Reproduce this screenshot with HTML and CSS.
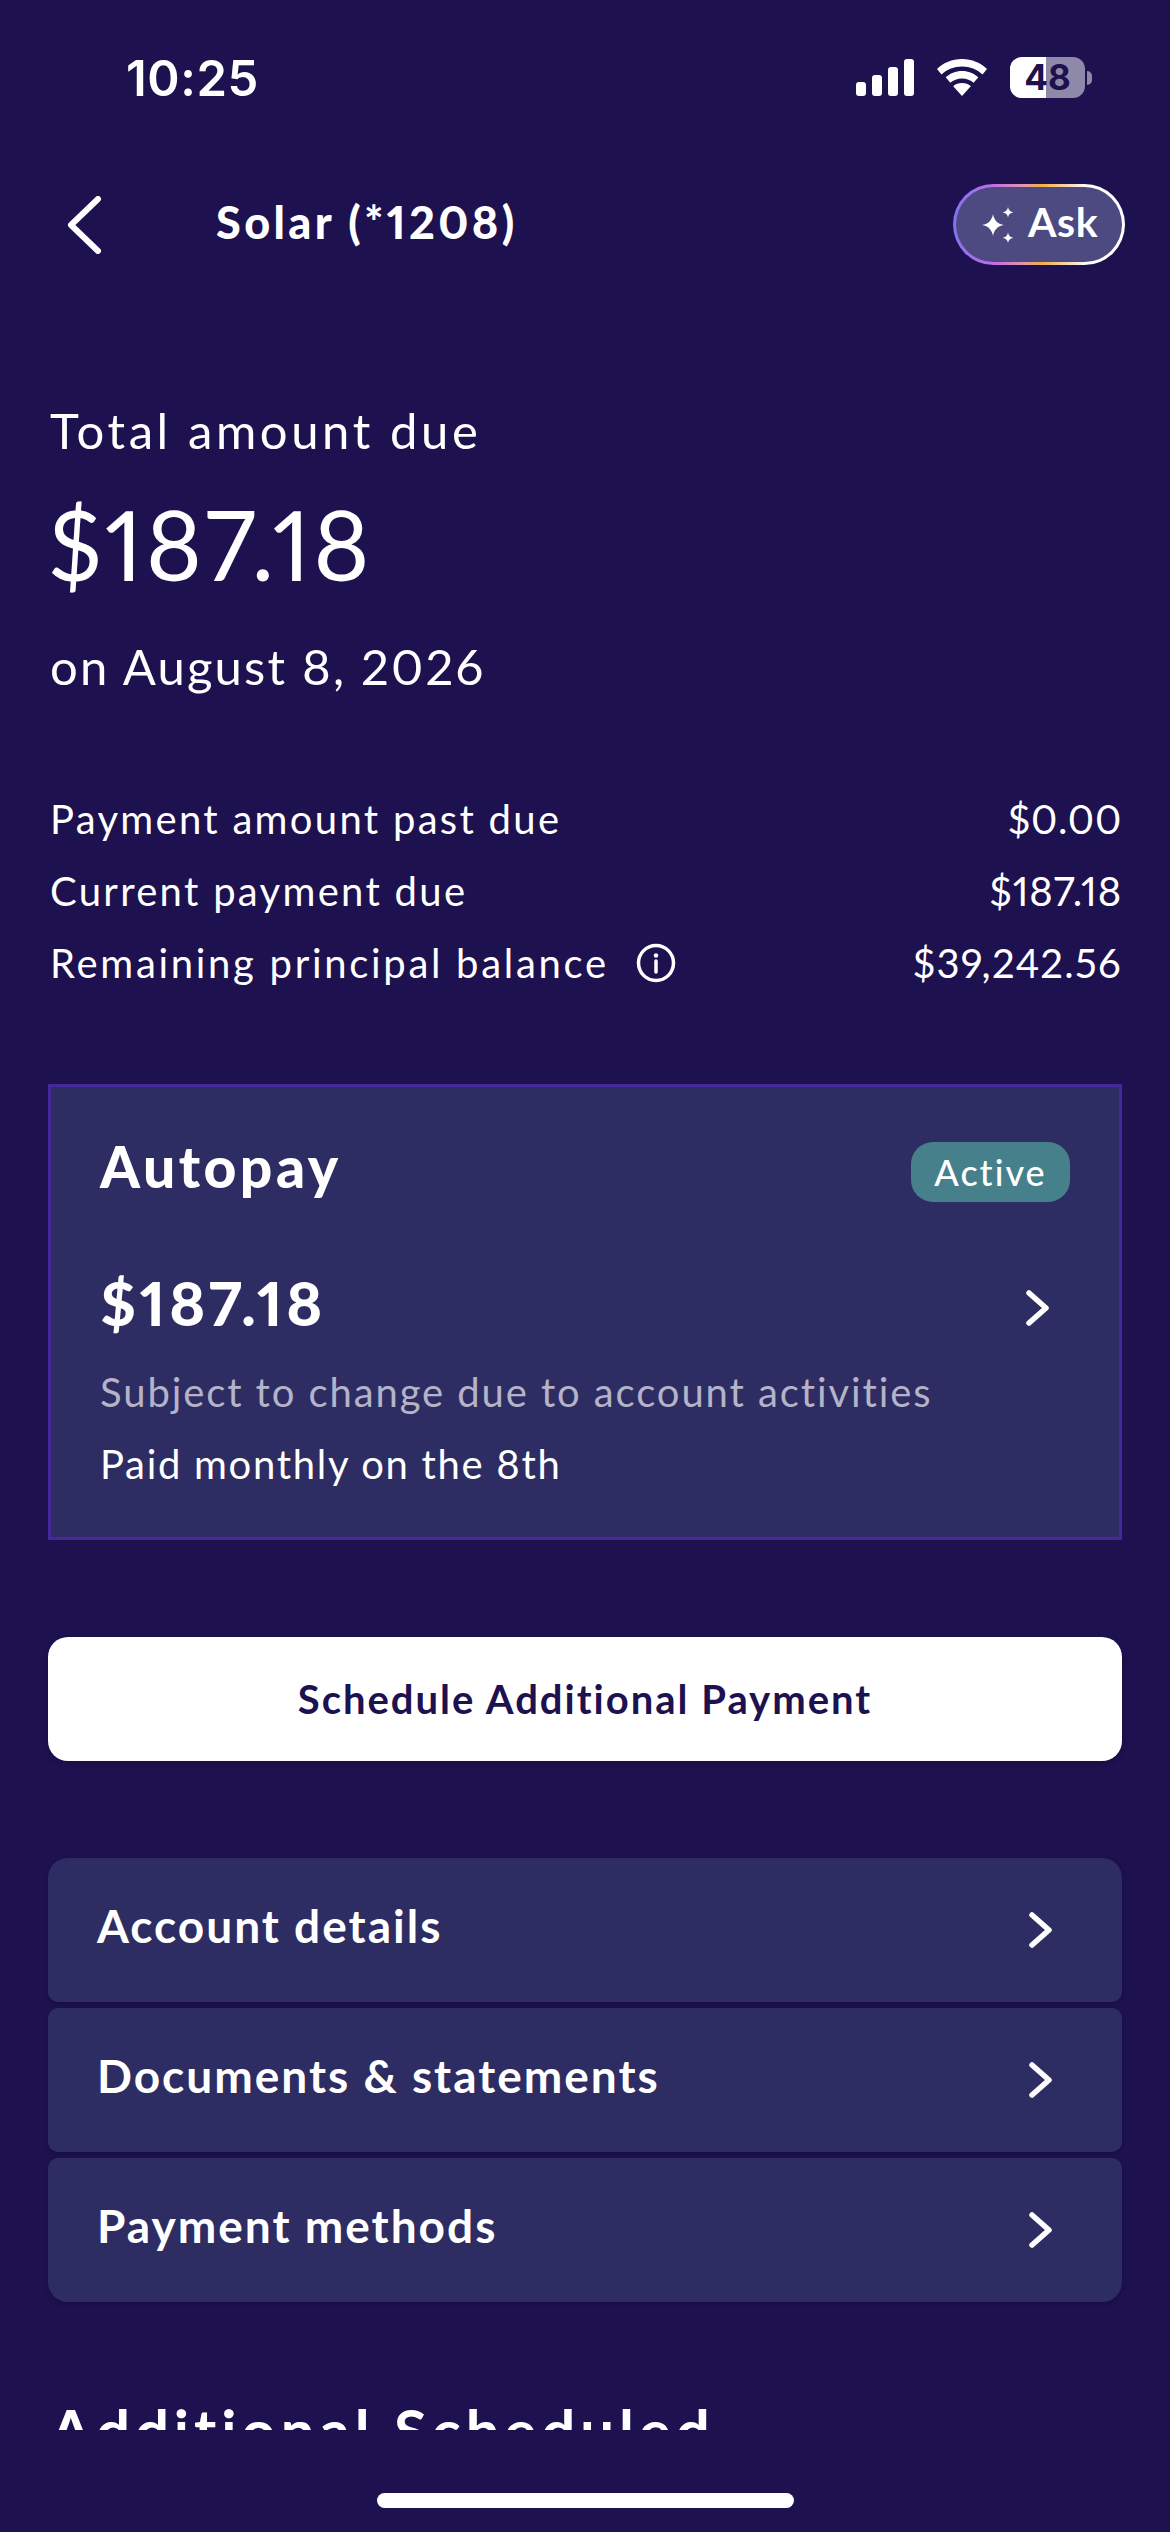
FILE: index.html
```html
<!DOCTYPE html>
<html lang="en">
<head>
<meta charset="utf-8">
<title>Solar (*1208)</title>
<link rel="stylesheet" href="styles.css">
</head>
<body>
<div class="phone">
  <div class="status">
    <span class="time">10:25</span>
    <div class="status-icons">
      <svg class="signal" width="58" height="37" viewBox="0 0 58 37"><rect x="0" y="23" width="10" height="14" rx="3"/><rect x="16" y="16" width="10" height="21" rx="3"/><rect x="32" y="8" width="10" height="29" rx="3"/><rect x="48" y="0" width="10" height="37" rx="3"/></svg>
      <svg class="wifi" width="52" height="37" viewBox="0 0 52 37"><path d="M26 0C16 0 7.500 3.800 1 10l4.500 5.500C11 10.300 18 7.500 26 7.500s15 2.800 20.500 8L51 10C44.500 3.800 36 0 26 0z"/><path d="M26 12c-6.500 0-12 2.400-16.300 6.300l4.600 5.500C17.400 21 21.400 19.400 26 19.400s8.600 1.600 11.700 4.400l4.600-5.500C38 14.400 32.500 12 26 12z"/><path d="M26 24c-3.500 0-6.500 1.200-8.800 3.200L26 37l8.800-9.800C32.500 25.200 29.500 24 26 24z"/></svg>
      <div class="battery">
        <div class="battery-body"><span class="battery-fill"></span><span class="battery-num">48</span></div>
        <span class="battery-nub"></span>
      </div>
    </div>
  </div>

  <header class="nav">
    <svg class="back" width="36" height="58" viewBox="0 0 36 58"><path d="M32 3 L5 29 L32 55"/></svg>
    <h1 class="nav-title">Solar (*1208)</h1>
    <button class="ask">
      <svg class="sparkle" width="34" height="36" viewBox="0 0 34 36"><path d="M12 7c1 6 4.500 10 11 11-6.500 1-10 5-11 11-1-6-4.500-10-11-11 6.500-1 10-5 11-11z"/><path d="M27 0c.5 3 2 4.700 5.500 5.300C29 6 27.500 7.600 27 10.500 26.500 7.600 25 6 21.500 5.300 25 4.700 26.500 3 27 0z"/><path d="M27 25.500c.5 3 2 4.700 5.500 5.300-3.500.7-5 2.300-5.500 5.200-.5-2.900-2-4.500-5.500-5.200 3.500-.6 5-2.300 5.500-5.300z"/></svg>
      <span class="ask-label">Ask</span>
    </button>
  </header>

  <main class="content">
    <section class="due">
      <p class="due-label">Total amount due</p>
      <p class="due-amount">$187.18</p>
      <p class="due-date">on August 8, 2026</p>
    </section>

    <section class="rows">
      <div class="row"><span>Payment amount past due</span><span class="val">$0.00</span></div>
      <div class="row"><span>Current payment due</span><span class="val">$187.18</span></div>
      <div class="row">
        <span class="with-icon">Remaining principal balance
          <svg class="info" width="40" height="40" viewBox="0 0 40 40"><circle cx="20" cy="20" r="17.500"/><path d="M20 18v11"/><circle class="dot" cx="20" cy="12.500" r="2.200"/></svg>
        </span>
        <span class="val val-wide">$39,242.56</span>
      </div>
    </section>

    <section class="autopay">
      <div class="autopay-head">
        <h2>Autopay</h2>
        <span class="badge">Active</span>
      </div>
      <div class="autopay-amount">
        <span>$187.18</span>
        <svg class="chev" width="26" height="36" viewBox="0 0 26 36"><path d="M4 3 L21 18 L4 33"/></svg>
      </div>
      <p class="muted">Subject to change due to account activities</p>
      <p class="plain">Paid monthly on the 8th</p>
    </section>

    <button class="primary">Schedule Additional Payment</button>

    <nav class="links">
      <a class="link"><span>Account details</span><svg class="chev" width="26" height="36" viewBox="0 0 26 36"><path d="M4 3 L21 18 L4 33"/></svg></a>
      <a class="link"><span>Documents &amp; statements</span><svg class="chev" width="26" height="36" viewBox="0 0 26 36"><path d="M4 3 L21 18 L4 33"/></svg></a>
      <a class="link"><span>Payment methods</span><svg class="chev" width="26" height="36" viewBox="0 0 26 36"><path d="M4 3 L21 18 L4 33"/></svg></a>
    </nav>

    <h2 class="section-title">Additional Scheduled</h2>
  </main>

  <div class="home-zone"><span class="home-bar"></span></div>
</div>
</body>
</html>
```
FILE: styles.css
```css
* { box-sizing: border-box; }
html, body { margin: 0; padding: 0; background: #1d1150; }
body { font-family: "Lato", "Liberation Sans", sans-serif; color: #fff; font-variant-numeric: proportional-nums; }
p, h1, h2 { margin: 0; }
button { font-family: inherit; border: 0; color: inherit; font-variant-numeric: inherit; }

.phone { width: 1170px; height: 2532px; display: flex; flex-direction: column; overflow: hidden; background: #1d1150; }

/* status bar */
.status { height: 156px; padding: 53px 78px 0 126px; display: flex; justify-content: space-between; align-items: flex-start; flex: none; }
.time { font-family: "Inter", sans-serif; font-size: 49px; line-height: 52px; font-weight: 600; letter-spacing: .6px; }
.status-icons { display: flex; align-items: center; gap: 22px; padding-top: 4px; }
.signal, .wifi { fill: #fff; display: block; }
.battery { display: flex; align-items: center; gap: 2px; }
.battery-body { position: relative; width: 75px; height: 41px; border-radius: 12px; background: #8f89a9; display: flex; align-items: center; justify-content: center; }
.battery-fill { position: absolute; left: 0; top: 0; bottom: 0; width: 36px; background: #fff; border-radius: 12px 0 0 12px; }
.battery-num { position: relative; font-family: "Inter", sans-serif; font-size: 35px; font-weight: 700; color: #1d1150; line-height: 41px; }
.battery-nub { width: 5px; height: 14px; background: #8f89a9; border-radius: 0 7px 7px 0; }

/* nav */
.nav { height: 81px; margin-top: 28px; padding: 0 45px 0 66px; display: flex; align-items: center; flex: none; }
.back { fill: none; stroke: #fff; stroke-width: 6; stroke-linecap: round; stroke-linejoin: round; display: block; }
.nav-title { margin-left: 114px; margin-bottom: 6px; font-size: 45px; font-weight: 900; letter-spacing: 3.400px; line-height: 56px; flex: 1; }
.ask { width: 172px; height: 81px; border-radius: 41px; border: 3px solid transparent; padding: 0 0 0 25px; display: flex; align-items: center; gap: 13px; font-size: 41px; font-weight: 700; letter-spacing: .6px;
  background: linear-gradient(#4c4a80, #4c4a80) padding-box, linear-gradient(90deg, #7f74ee 0%, #c36ce9 24%, #e39aa4 42%, #f4ae45 52%, #f7dcb8 68%, #fff 78%, #fff 100%) border-box; }
.ask-label { margin-bottom: 6px; }
.sparkle { fill: #fff; display: block; flex: none; }

/* content */
.content { height: 2165px; padding: 0 48px; overflow: hidden; flex: none; }
.due { padding: 135px 2px 0; }
.due-label { font-size: 49px; line-height: 60px; letter-spacing: 3.600px; }
.due-amount { font-size: 96px; line-height: 120px; margin-top: 24px; margin-left: -2px; letter-spacing: 2.800px; }
.due-date { margin-top: 32px; font-size: 49px; line-height: 60px; letter-spacing: 2.200px; }

.rows { margin-top: 95px; padding: 0 0 0 2px; display: flex; flex-direction: column; gap: 16px; }
.row { display: flex; justify-content: space-between; align-items: center; font-size: 40px; line-height: 56px; letter-spacing: 2.300px; }
.val { letter-spacing: .8px; }
.val-wide { letter-spacing: 1.300px; }
.with-icon { display: flex; align-items: center; gap: 27px; letter-spacing: 2.700px; }
.info { fill: none; stroke: #fff; stroke-width: 3.500; display: block; stroke-linecap: round; }
.info .dot { fill: #fff; stroke: none; }

.autopay { margin-top: 93px; height: 456px; border: 3px solid #43299b; background: #2e2d63; padding: 49px 49px 0 49px; }
.autopay-head { display: flex; justify-content: space-between; align-items: center; height: 60px; }
.autopay-head h2 { font-size: 57px; font-weight: 900; line-height: 60px; letter-spacing: 3.500px; }
.badge { width: 159px; height: 60px; margin-top: 12px; border-radius: 22px; background: #46808a; display: flex; align-items: center; justify-content: center; font-size: 36px; font-weight: 500; letter-spacing: 2px; }
.autopay-amount { margin-top: 77px; display: flex; justify-content: space-between; align-items: center; height: 60px; font-size: 61px; font-weight: 900; line-height: 60px; padding-right: 19px; letter-spacing: 3.700px; }
.autopay-amount .chev { margin-top: 10px; }
.muted { margin-top: 31px; font-size: 40px; line-height: 56px; color: #b5b3c8; letter-spacing: 1.900px; }
.plain { margin-top: 16px; font-size: 40px; line-height: 56px; letter-spacing: 1.700px; }
.chev { fill: none; stroke: #fff; stroke-width: 5.500; stroke-linecap: round; stroke-linejoin: round; display: block; flex: none; }

.primary { display: block; width: 100%; height: 124px; margin-top: 97px; border-radius: 20px; background: #fff; color: #1d1150; font-size: 40px; font-weight: 700; letter-spacing: 2px; box-shadow: 0 3px 6px rgba(0,0,0,.2); }

.links { margin-top: 97px; display: flex; flex-direction: column; gap: 6px; }
.link { height: 144px; background: #2e2d63; border-radius: 10px; padding: 0 68px 10px 49px; display: flex; justify-content: space-between; align-items: center; font-size: 46px; font-weight: 700; letter-spacing: 2px; box-shadow: 0 2px 4px rgba(0,0,0,.2); }
.link:first-child { border-radius: 20px 20px 10px 10px; }
.link:last-child { border-radius: 10px 10px 20px 20px; }
.link .chev { margin-top: 10px; }

.section-title { margin-top: 94px; padding-left: 2px; font-size: 60px; font-weight: 700; line-height: 68px; letter-spacing: 4.900px; white-space: nowrap; }

/* home indicator */
.home-zone { flex: 1; display: flex; justify-content: center; background: #1d1150; }
.home-bar { width: 417px; height: 15px; border-radius: 8px; background: #fff; margin-top: 63px; }
```
